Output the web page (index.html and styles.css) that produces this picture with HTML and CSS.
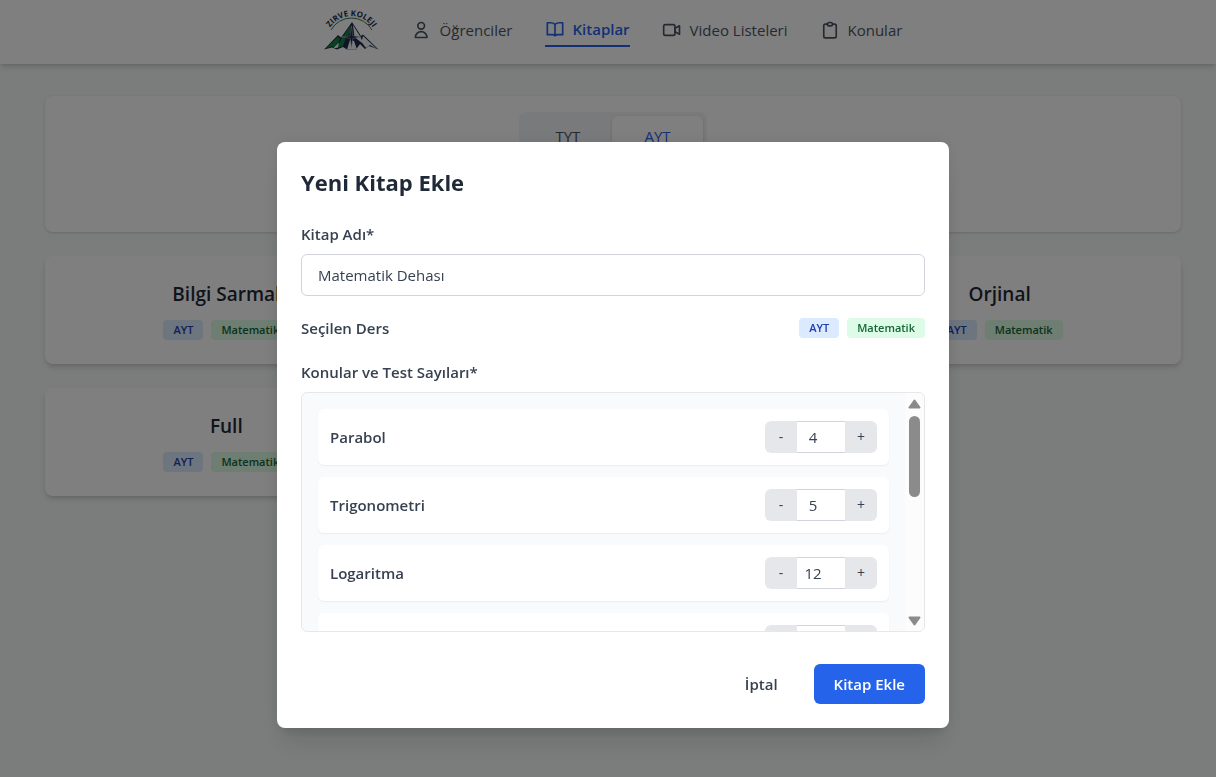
FILE: index.html
```html
<!DOCTYPE html>
<html lang="tr">
<head>
<meta charset="utf-8">
<meta name="viewport" content="width=device-width, initial-scale=1">
<title>Kitaplar</title>
<link rel="stylesheet" href="styles.css">
</head>
<body>
<header class="header">
  <nav class="nav">
    <a class="logo" href="#">
      <svg viewBox="0 -3 56 48" width="56" height="48" role="img" aria-label="Zirve Koleji">
        <defs><path id="arc" d="M2 30.500A25.500 25.500 0 0 1 53 30.500"/></defs>
        <text class="logo-text"><textPath href="#arc" startOffset="50%" text-anchor="middle">ZIRVE KOLEJI</textPath></text>
        <path d="M7 19A23.500 23.500 0 0 1 48 19" fill="none" stroke="#2c7f55" stroke-width="1"/>
        <path d="M0 38.500L14 24l3 2.500L28 11l9 14 2-1.500L54.500 38.500 45 35l-4 3-5-5-4 5.500h-9L19 36l-6 2.500-5-2z" fill="#1c2b4a"/>
        <path d="M2 37.500L13.500 26l2.500 2-4 8-4-.5zM17 28.500l9.500-14.500-.5 8-4 4-3 9-6 2z" fill="#17804a"/>
        <path d="M29 14l7.500 12 3 7-4-3-5-4zM26 29l4 1 3 8.500H23zM39 25l14 13-7-4-4 3-4.500-6zM9 37.500l6-6-1 5z" fill="#f4f6f6"/>
        <path d="M27.500 15l1.300 9.700L37 26l-8.200 1.300L27.500 37l-1.300-9.700L18 26l8.200-1.300z" fill="#1c2b4a" stroke="#e8eeee" stroke-width=".4"/>
      </svg>
    </a>
    <a class="nav-item" href="#">
      <svg class="icon" viewBox="0 0 24 24"><circle cx="11" cy="7" r="4"/><path d="M11 14a7 7 0 0 0-7 7h14a7 7 0 0 0-7-7z"/></svg>
      <span>Öğrenciler</span>
    </a>
    <a class="nav-item nav-active" href="#" aria-current="page">
      <svg class="icon" viewBox="0 0 24 24"><path d="M12 6.500C10.500 5 8.500 4.500 6.500 4.500H2.800v14.300H8.500c1.500 0 2.700.4 3.500 1.200.8-.8 2-1.200 3.500-1.200h5.700V4.500H17.500C15.500 4.500 13.500 5 12 6.500zM12 6.500V20"/></svg>
      <span>Kitaplar</span>
    </a>
    <a class="nav-item" href="#">
      <svg class="icon" viewBox="0 0 24 24"><rect x="2" y="5.500" width="13.500" height="13" rx="2"/><path d="M15.500 10l5.500-3v10l-5.500-3z"/></svg>
      <span>Video Listeleri</span>
    </a>
    <a class="nav-item" href="#">
      <svg class="icon" viewBox="0 0 24 24"><path d="M9 5H6.500a2 2 0 0 0-2 2v12.500a2 2 0 0 0 2 2h11a2 2 0 0 0 2-2V7a2 2 0 0 0-2-2H15"/><rect x="9" y="3" width="6" height="4" rx="2"/></svg>
      <span>Konular</span>
    </a>
  </nav>
</header>

<main class="main">
  <section class="filter">
    <div class="tabs">
      <button class="tab" type="button">TYT</button>
      <button class="tab tab-on" type="button">AYT</button>
    </div>
  </section>
  <section class="books">
    <article class="book">
      <h2 class="book-title">Bilgi Sarmal</h2>
      <div class="badges"><span class="badge badge-blue">AYT</span><span class="badge badge-green">Matematik</span></div>
    </article>
    <article class="book book-end">
      <h2 class="book-title">Orjinal</h2>
      <div class="badges"><span class="badge badge-blue">AYT</span><span class="badge badge-green">Matematik</span></div>
    </article>
    <article class="book">
      <h2 class="book-title">Full</h2>
      <div class="badges"><span class="badge badge-blue">AYT</span><span class="badge badge-green">Matematik</span></div>
    </article>
  </section>
</main>

<div class="overlay">
  <form class="modal" role="dialog" aria-modal="true" aria-labelledby="modal-title">
    <h1 class="modal-title" id="modal-title">Yeni Kitap Ekle</h1>
    <div class="field">
      <label class="label" for="book-name">Kitap Adı*</label>
      <input class="text-input" id="book-name" type="text" value="Matematik Dehası">
    </div>
    <div class="lesson">
      <span class="label">Seçilen Ders</span>
      <div class="badges"><span class="badge badge-blue">AYT</span><span class="badge badge-green">Matematik</span></div>
    </div>
    <div class="field">
      <span class="label" id="topics-label">Konular ve Test Sayıları*</span>
      <div class="topics" role="group" aria-labelledby="topics-label">
        <div class="topic-list">
          <div class="topic">
            <label class="label" for="t1">Parabol</label>
            <div class="stepper"><button class="step" type="button">-</button><input class="count" id="t1" type="text" inputmode="numeric" value="4"><button class="step" type="button">+</button></div>
          </div>
          <div class="topic">
            <label class="label" for="t2">Trigonometri</label>
            <div class="stepper"><button class="step" type="button">-</button><input class="count" id="t2" type="text" inputmode="numeric" value="5"><button class="step" type="button">+</button></div>
          </div>
          <div class="topic">
            <label class="label" for="t3">Logaritma</label>
            <div class="stepper"><button class="step" type="button">-</button><input class="count" id="t3" type="text" inputmode="numeric" value="12"><button class="step" type="button">+</button></div>
          </div>
          <div class="topic">
            <div class="stepper"><button class="step" type="button" aria-label="Azalt"></button><input class="count" type="text" inputmode="numeric" aria-label="Test sayısı"><button class="step" type="button" aria-label="Artır"></button></div>
          </div>
        </div>
        <div class="scrollbar" aria-hidden="true">
          <svg width="13" height="10" viewBox="0 0 13 10"><path d="M6.500 1.500L11.500 8.500H1.500z" fill="#8b8b8b" stroke="#8b8b8b" stroke-width="2" stroke-linejoin="round"/></svg>
          <div class="track"><div class="thumb"></div></div>
          <svg width="13" height="10" viewBox="0 0 13 10"><path d="M6.500 8.500L11.500 1.500H1.500z" fill="#8b8b8b" stroke="#8b8b8b" stroke-width="2" stroke-linejoin="round"/></svg>
        </div>
      </div>
    </div>
    <div class="actions">
      <button class="btn" type="button">İptal</button>
      <button class="btn btn-primary" type="submit">Kitap Ekle</button>
    </div>
  </form>
</div>
</body>
</html>
```

FILE: styles.css
```css
*, *::before, *::after { box-sizing: border-box; }

body {
  margin: 0;
  min-height: 100vh;
  background: #f6faf8;
  color: #1f2937;
  font-family: "Open Sans", "Noto Sans", sans-serif;
  font-size: 15px;
  line-height: 24px;
}

h1, h2 { margin: 0; }
button, input { font: inherit; color: inherit; }
button { border: 0; padding: 0; background: none; cursor: pointer; }

.header {
  display: flex;
  justify-content: center;
  height: 64px;
  padding-left: 10px;
  background: #fff;
  box-shadow: 0 4px 6px -1px rgba(0, 0, 0, .12), 0 2px 4px -1px rgba(0, 0, 0, .1);
}
.nav { display: flex; align-items: center; gap: 32px; }
.logo { display: flex; }
.logo-text { font-size: 8px; font-weight: 700; fill: #1c2b4a; }
.nav-item {
  display: flex;
  align-items: center;
  gap: 8px;
  padding-bottom: 4px;
  color: #4b5563;
  text-decoration: none;
}
.nav-active {
  border-bottom: 2px solid #2563eb;
  color: #2563eb;
  font-weight: 600;
}
.icon {
  width: 20px;
  height: 20px;
  fill: none;
  stroke: currentColor;
  stroke-width: 2;
  stroke-linejoin: round;
  stroke-linecap: round;
}

.main {
  display: grid;
  gap: 24px;
  max-width: 1216px;
  margin: 0 auto;
  padding: 32px 35px 32px 45px;
}
.filter {
  display: flex;
  justify-content: center;
  padding: 16px 16px 72px;
  border-radius: 8px;
  background: #fff;
  box-shadow: 0 1px 3px rgba(0, 0, 0, .16);
}
.tabs {
  display: flex;
  padding: 4px;
  border-radius: 8px;
  background: #f3f4f6;
}
.tab { padding: 8px 32px; border-radius: 6px; color: #4b5563; }
.tab-on { background: #fff; color: #2563eb; box-shadow: 0 1px 3px rgba(0, 0, 0, .16); }

.books { display: grid; grid-template-columns: repeat(3, 1fr); gap: 24px; }
.book {
  display: grid;
  justify-items: center;
  gap: 12px;
  padding: 24px;
  border-radius: 8px;
  background: #fff;
  box-shadow: 0 4px 6px -1px rgba(0, 0, 0, .12), 0 2px 4px -1px rgba(0, 0, 0, .1);
}
.book-end { grid-column: 3; }
.book-title { font-size: 19px; line-height: 28px; font-weight: 600; }

.badges { display: flex; gap: 8px; }
.badge {
  padding: 0 10px;
  border-radius: 4px;
  font-size: 11px;
  line-height: 20px;
  font-weight: 600;
}
.badge-blue { background: #dbeafe; color: #1e40af; }
.badge-green { background: #dcfce7; color: #166534; }

.overlay {
  position: fixed;
  inset: 0;
  display: flex;
  justify-content: center;
  align-items: flex-start;
  padding: 142px 0 0 10px;
  background: rgba(0, 0, 0, .5);
}
.modal {
  display: flex;
  flex-direction: column;
  gap: 20px;
  width: 100%;
  max-width: 672px;
  padding: 24px;
  border-radius: 8px;
  background: #fff;
  box-shadow: 0 20px 25px -5px rgba(0, 0, 0, .1), 0 10px 10px -5px rgba(0, 0, 0, .06), 0 0 16px rgba(0, 0, 0, .08);
}
.modal-title { padding-bottom: 4px; font-size: 22px; line-height: 32px; font-weight: 700; }
.field { display: grid; gap: 8px; }
.label { color: #374151; font-weight: 600; }
.text-input {
  width: 100%;
  height: 42px;
  padding: 0 16px;
  border: 1px solid #d1d5db;
  border-radius: 6px;
  background: #fff;
  color: #374151;
}
.lesson { display: flex; align-items: center; justify-content: space-between; }

.topics {
  display: flex;
  height: 240px;
  overflow: hidden;
  border: 1px solid #e5e7eb;
  border-radius: 6px;
  background: #f9fafb;
}
.topic-list {
  flex: 1;
  display: flex;
  flex-direction: column;
  gap: 12px;
  padding: 16px;
}
.topic {
  display: flex;
  flex-shrink: 0;
  align-items: center;
  padding: 12px;
  border-radius: 6px;
  background: #fff;
  box-shadow: 0 1px 2px rgba(0, 0, 0, .06);
}
.stepper { display: flex; height: 32px; margin-left: auto; }
.step { width: 32px; background: #e5e7eb; color: #374151; font-size: 14px; }
.step:first-child { border-radius: 6px 0 0 6px; }
.step:last-child { border-radius: 0 6px 6px 0; }
.count {
  width: 48px;
  padding: 0 16px 0 0;
  border: solid #d1d5db;
  border-width: 1px 0;
  border-radius: 0;
  background: #fff;
  color: #374151;
  text-align: center;
}
.scrollbar {
  display: flex;
  flex-direction: column;
  align-items: center;
  gap: 7px;
  width: 19px;
  padding: 6px 0 5px;
  background: #fcfcfc;
}
.track { flex: 1; }
.thumb { width: 11px; height: 81px; border-radius: 6px; background: #8b8b8b; }

.actions { display: flex; justify-content: flex-end; gap: 16px; padding-top: 12px; }
.btn { height: 40px; padding: 0 20px; border-radius: 6px; color: #374151; font-weight: 600; }
.btn-primary { background: #2563eb; color: #fff; }
```
